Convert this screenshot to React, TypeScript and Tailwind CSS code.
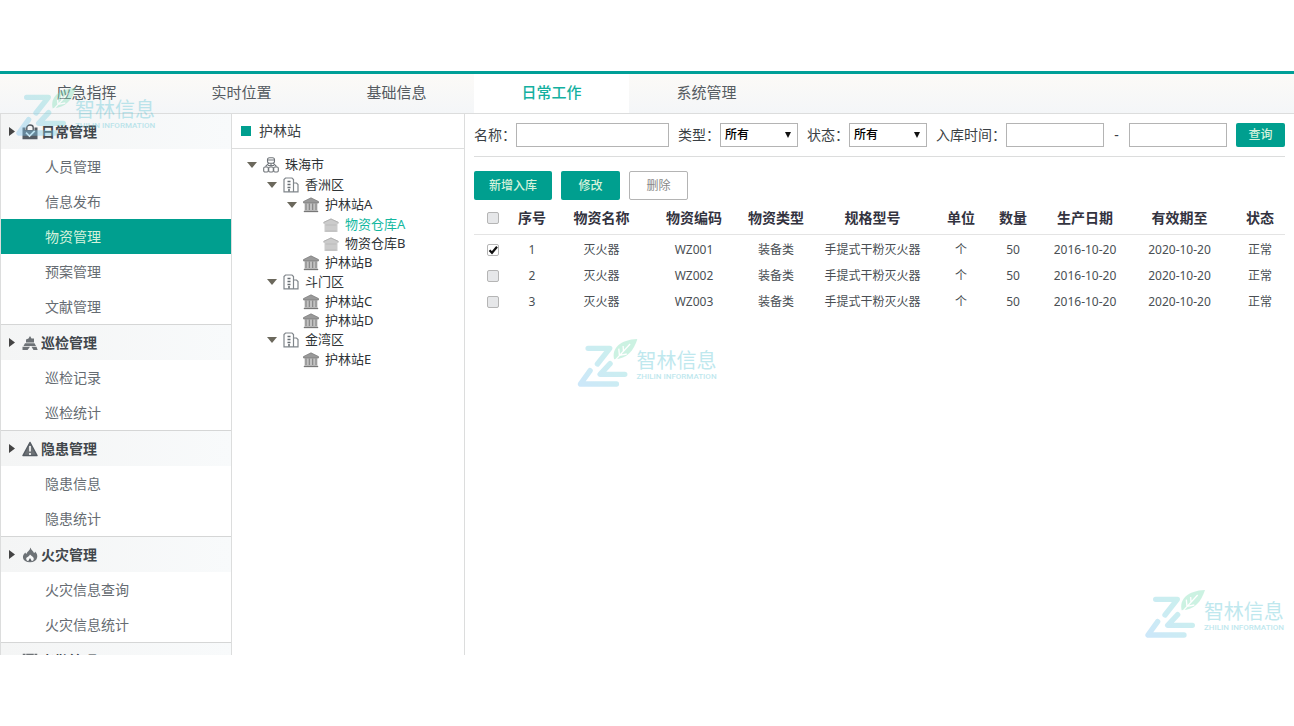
import { useState } from 'react'
import type { ReactNode } from 'react'
import clsx from 'clsx'

type TreeNode = { name: string; kind: 'city' | 'district' | 'station' | 'store'; children?: TreeNode[] }

const tabs = ['应急指挥', '实时位置', '基础信息', '日常工作', '系统管理']

const groups = [
  { title: '日常管理', icon: 'bag', items: ['人员管理', '信息发布', '物资管理', '预案管理', '文献管理'] },
  { title: '巡检管理', icon: 'patrol', items: ['巡检记录', '巡检统计'] },
  { title: '隐患管理', icon: 'warn', items: ['隐患信息', '隐患统计'] },
  { title: '火灾管理', icon: 'fire', items: ['火灾信息查询', '火灾信息统计'] },
  { title: '考勤管理', icon: 'card', items: [] },
]

const tree: TreeNode[] = [
  {
    name: '珠海市',
    kind: 'city',
    children: [
      {
        name: '香洲区',
        kind: 'district',
        children: [
          {
            name: '护林站A',
            kind: 'station',
            children: [
              { name: '物资仓库A', kind: 'store' },
              { name: '物资仓库B', kind: 'store' },
            ],
          },
          { name: '护林站B', kind: 'station' },
        ],
      },
      {
        name: '斗门区',
        kind: 'district',
        children: [
          { name: '护林站C', kind: 'station' },
          { name: '护林站D', kind: 'station' },
        ],
      },
      { name: '金湾区', kind: 'district', children: [{ name: '护林站E', kind: 'station' }] },
    ],
  },
]

const columns = [
  { title: '序号', width: 'w-[40px]' },
  { title: '物资名称', width: 'w-[99px]' },
  { title: '物资编码', width: 'w-[86px]' },
  { title: '物资类型', width: 'w-[78px]' },
  { title: '规格型号', width: 'w-[115px]' },
  { title: '单位', width: 'w-[62px]' },
  { title: '数量', width: 'w-[42px]' },
  { title: '生产日期', width: 'w-[102px]' },
  { title: '有效期至', width: 'w-[87px]' },
  { title: '状态', width: 'w-[62px] pl-3' },
]

const rows = ['WZ001', 'WZ002', 'WZ003'].map((code, i) => [
  String(i + 1), '灭火器', code, '装备类', '手提式干粉灭火器', '个', '50', '2016-10-20', '2020-10-20', '正常',
])

const field = 'h-6 border border-[#b4b4b4] bg-white px-1 text-xs text-black outline-none focus:border-[#009f8f]'

const menuIcons: Record<string, ReactNode> = {
  bag: (
    <>
      <path d="M4.800 6V3.500C4.800 2 6.200 1 8 1S11.200 2 11.200 3.500V6" fill="none" stroke="#555c63" strokeWidth="1.400" />
      <path d="M0.500 3.500H3.500V6H12.500V3.500H15.500V15.300H0.500Z" fill="#555c63" />
      <path d="M4 8.700L7.500 12L12.700 6.800" fill="none" stroke="#e4f3f3" strokeWidth="1.700" />
    </>
  ),
  patrol: (
    <g fill="#6d7276">
      <path d="M8 1L9.500 3.500H12V7.500H4V4.500L6.500 3.500Z" />
      <path d="M3 8.300H12.500L14 11H1.500Z" />
      <path d="M0.500 11.800H8L5.500 15H0.500ZM9.500 11.800H14.500L15.700 15H11.500Z" />
    </g>
  ),
  warn: (
    <>
      <path d="M8 1.500L15 14.500H1Z" fill="#6d7276" stroke="#555c63" strokeWidth="1.500" strokeLinejoin="round" />
      <path d="M8 5V10.500M8 12V14" stroke="#fff" strokeWidth="1.600" />
    </>
  ),
  fire: (
    <>
      <path d="M8.500 0.500C9 3 11.500 4 12 6C13 5.700 13 5 13 4.500C15 6.500 15.800 8.500 15 11C14.300 13.500 12 15.300 8 15.300S1.500 13.500 1 11C0.500 8.500 2 6.500 3.500 5.500C3.500 6.300 4 6.800 4.500 6.800C5 4.500 8 3.500 8.500 0.500Z" fill="#6d7276" />
      <path d="M8 7.500C10 9.500 12 10 11.800 12C11.500 14 9.500 14.300 8 14.300S4.500 14 4.200 12C4 10 7 10 8 7.500Z" fill="#f6f7f7" />
      <path d="M8 11L10 14.500H6Z" fill="#555c63" />
    </>
  ),
  card: (
    <g fill="none" stroke="#6d7276" strokeWidth="1.500">
      <path d="M3.500 1.500H1.500V14H14.500V1.500H12.500" />
      <path d="M5 1.500H11V6H5ZM8 1.500V6M4 9.500H12" />
    </g>
  ),
}

const treeIcons: Record<TreeNode['kind'], ReactNode> = {
  city: (
    <g fill="none" stroke="#70757a" strokeWidth="1.100">
      <rect x="4.500" y="0.800" width="7" height="5.400" rx="2" />
      <path d="M4.500 3H11.500M6 6.200L2.500 9.500M10 6.200L13.500 9.500M8 6.200V9.500M5 8.500H11" />
      <rect x="0.700" y="10" width="4.600" height="5" rx="1.200" />
      <rect x="5.700" y="10" width="4.600" height="5" rx="1.200" />
      <rect x="10.700" y="10" width="4.600" height="5" rx="1.200" />
    </g>
  ),
  district: (
    <g fill="none" stroke="#80868b" strokeWidth="1.200">
      <path d="M1 14.800V2.500L2.500 1H9L10.500 2.500V14.800ZM10.500 6H13.500L15 7.500V14.800H10.500" />
      <path d="M4.500 4.500H7.500M4.500 7.500H7.500M4.500 10.500H7.500M6 12V14.500" stroke="#666c72" strokeWidth="1.500" />
    </g>
  ),
  station: (
    <>
      <path d="M1.500 6H14.500V14.500H1.500Z" fill="#c2c2c2" />
      <path d="M8 0.800L15.500 4.500V6H0.500V4.500Z" fill="#9a9a9a" stroke="#6f6f6f" strokeWidth="0.600" />
      <path d="M3 6.500V13M6.300 6.500V13M9.700 6.500V13M13 6.500V13" stroke="#828282" strokeWidth="1.100" />
      <path d="M0.800 14.500H15.200" stroke="#777" strokeWidth="1.300" />
    </>
  ),
  store: (
    <>
      <path d="M0.500 5L8 1.500L15.500 5V7H14.500V15H1.500V7H0.500Z" fill="#cbcbcb" />
      <path d="M2.500 8H13.500M2.500 14H13.500" stroke="#b8b8b8" strokeWidth="0.800" />
      <path d="M0.500 5.500L8 2L15.500 5.500" fill="none" stroke="#adadad" strokeWidth="0.900" />
    </>
  ),
}

function Icon({ children }: { children: ReactNode }) {
  return <svg viewBox="0 0 16 16" className="size-4 shrink-0" aria-hidden="true">{children}</svg>
}

function Watermark({ id, className }: { id: string; className: string }) {
  return (
    <div className={clsx('pointer-events-none absolute flex items-start opacity-40', className)}>
      <svg viewBox="24 27 180 144" className="h-12 w-[60px]" aria-hidden="true">
        <defs>
          <linearGradient id={id} gradientUnits="userSpaceOnUse" x1="24" y1="171" x2="150" y2="45">
            <stop offset="0" stopColor="#82c4f4" />
            <stop offset="1" stopColor="#7fdcd2" />
          </linearGradient>
        </defs>
        <g fill="none" stroke={`url(#${id})`} strokeWidth="16" strokeLinecap="round" strokeLinejoin="round">
          <path d="M56 55H121L84 102" />
          <path d="M62 122L33 162H141" />
          <path d="M122 101L92 133H166" />
        </g>
        <path d="M134 88C126 55 152 29 204 27C192 62 174 86 134 88Z" fill="#82dfb9" />
        <path d="M134 94L182 42M150 76L148 56M150 76L172 72M162 63L161 48" fill="none" stroke="#fff" strokeWidth="4" />
      </svg>
      <div className="-ml-px pt-2 text-[#62c6d6]">
        <p className="text-xl leading-7">智林信息</p>
        <p className="font-[Roboto,sans-serif] text-[8px] leading-1 font-medium whitespace-nowrap">ZHILIN INFORMATION</p>
      </div>
    </div>
  )
}

function Checkbox({ label, defaultChecked }: { label: string; defaultChecked?: boolean }) {
  return (
    <span className="relative mx-auto block size-3">
      <input
        type="checkbox"
        aria-label={label}
        defaultChecked={defaultChecked}
        className="peer block size-3 appearance-none rounded-xs border border-[#b5b5b5] bg-[#e6e7e9] checked:bg-white"
      />
      <svg viewBox="0 0 12 12" className="pointer-events-none absolute inset-0 hidden size-3 peer-checked:block" aria-hidden="true">
        <path d="M2.500 6.200L5 8.800L10 2.800" fill="none" stroke="#111" strokeWidth="2.200" />
      </svg>
    </span>
  )
}

function Select({ id }: { id: string }) {
  return (
    <span className="relative block">
      <select id={id} className={clsx(field, 'block w-[78px] appearance-none font-medium')}>
        <option>所有</option>
      </select>
      <svg viewBox="0 0 6 6" className="pointer-events-none absolute top-[9px] right-[7px] size-1.5" aria-hidden="true">
        <path d="M0 0H6L3 6Z" fill="#111" />
      </svg>
    </span>
  )
}

function Tree({ nodes, selected, onSelect }: { nodes: TreeNode[]; selected: string; onSelect: (name: string) => void }) {
  return (
    <ul>
      {nodes.map(node => (
        <li key={node.name}>
          <button
            onClick={() => onSelect(node.name)}
            className={clsx('flex h-[19px] items-center text-[13px] whitespace-nowrap', selected === node.name ? 'text-[#14b89f]' : 'text-[#2f3437]')}
          >
            <span className="w-4">
              {node.children && (
                <svg viewBox="0 0 10 6" className="h-1.5 w-2.5" aria-hidden="true">
                  <path d="M0 0H10L5 6Z" fill="#6b685c" />
                </svg>
              )}
            </span>
            <Icon>{treeIcons[node.kind]}</Icon>
            <span className="ml-1.5">{node.name}</span>
          </button>
          {node.children && (
            <div className="pt-px pl-5">
              <Tree nodes={node.children} selected={selected} onSelect={onSelect} />
            </div>
          )}
        </li>
      ))}
    </ul>
  )
}

export default function App() {
  const [tab, setTab] = useState('日常工作')
  const [menu, setMenu] = useState('物资管理')
  const [node, setNode] = useState('物资仓库A')

  return (
    <div lang="zh-CN" className="relative h-screen bg-white py-[71px] font-['Noto_Sans','Noto_Sans_CJK_SC',sans-serif] text-[#3a3f44]">
      <div className="flex h-full flex-col overflow-hidden">
        <header className="shrink-0 border-t-3 border-b border-t-[#009f97] border-b-[#dcdddd] bg-linear-to-b from-[#fcfaf7] to-[#f4f6f8]">
          <nav className="flex h-[39px] pl-[9px]">
            {tabs.map(t => (
              <button
                key={t}
                onClick={() => setTab(t)}
                className={clsx('w-[155px] pb-0.5 text-[15px]', t === tab ? 'bg-white font-medium text-[#14b09f]' : 'text-[#555b61]')}
              >
                {t}
              </button>
            ))}
          </nav>
        </header>

        <div className="flex min-h-0 flex-1">
          {/* Menu */}
          <aside className="w-[232px] shrink-0 overflow-hidden border-x border-[#dcdddd] text-sm">
            {groups.map((g, i) => (
              <section key={g.title}>
                <h2 className={clsx('flex items-center bg-linear-to-r from-[#f4f5f5] to-[#f8fafb] pl-2 font-bold text-[#42474c]', i > 0 ? 'h-9 border-t border-[#d5d6d6]' : 'h-[35px]')}>
                  <svg viewBox="0 0 6 9" className="mr-[7px] h-[9px] w-1.5" aria-hidden="true">
                    <path d="M0 0L6 4.500L0 9Z" fill="#444" />
                  </svg>
                  <Icon>{menuIcons[g.icon]}</Icon>
                  <span className="ml-[3px]">{g.title}</span>
                </h2>
                {g.items.map(item => (
                  <button
                    key={item}
                    onClick={() => setMenu(item)}
                    className={clsx('block h-[35px] w-full pl-11 text-left', item === menu ? 'bg-[#009f8f] text-[#d5f2dc]' : 'text-[#666c72]')}
                  >
                    {item}
                  </button>
                ))}
              </section>
            ))}
          </aside>

          {/* Stations */}
          <aside className="w-[233px] shrink-0 border-r border-[#dcdddd]">
            <h2 className="flex h-[35px] items-center gap-2 border-b border-[#dcdddd] pl-[9px] text-sm text-[#3a3f44]">
              <span className="size-2.5 bg-[#009f8f]" />
              护林站
            </h2>
            <div className="pt-1.5 pl-[15px]">
              <Tree nodes={tree} selected={node} onSelect={setNode} />
            </div>
          </aside>

          {/* Supplies */}
          <main className="min-w-0 flex-1 px-[9px] pt-[9px]">
            <form onSubmit={e => e.preventDefault()} className="flex items-center border-b border-[#dcdddd] pb-[9px] text-sm">
              <label htmlFor="name">名称：</label>
              <input id="name" className={clsx(field, 'mr-[9px] min-w-0 flex-1')} />
              <label htmlFor="type">类型：</label>
              <Select id="type" />
              <label htmlFor="status" className="ml-[9px]">状态：</label>
              <Select id="status" />
              <label htmlFor="from" className="ml-[9px]">入库时间：</label>
              <input id="from" className={clsx(field, 'w-[98px]')} />
              <span className="w-[25px] text-center">-</span>
              <input aria-label="截止时间" className={clsx(field, 'w-[98px]')} />
              <button className="ml-[9px] h-6 w-[49px] rounded-xs bg-[#009f8f] text-xs font-medium text-[#d5f2dc]">查询</button>
            </form>

            <div className="mt-3.5 flex gap-[9px] text-xs">
              <button className="h-[29px] w-[78px] rounded-xs bg-[#009f8f] font-medium text-[#d5f2dc]">新增入库</button>
              <button className="h-[29px] w-[59px] rounded-xs bg-[#009f8f] font-medium text-[#d5f2dc]">修改</button>
              <button className="h-[29px] w-[59px] rounded-xs border border-[#b4b4b4] text-[#888]">删除</button>
            </div>

            <table className="mt-0.5 w-full table-fixed border-collapse text-center text-xs">
              <thead>
                <tr className="h-8 border-b border-[#e4e4e4] text-sm text-[#33333f]">
                  <th className="w-[38px]"><Checkbox label="全选" /></th>
                  {columns.map(c => (
                    <th key={c.title} className={clsx('whitespace-nowrap', c.width)}>{c.title}</th>
                  ))}
                </tr>
              </thead>
              <tbody className="text-[#4a4f54]">
                {rows.map((row, i) => (
                  <tr key={row[0]} className="h-[26px]">
                    <td className="pt-1.5"><Checkbox label={row[2]} defaultChecked={i === 0} /></td>
                    {row.map((cell, c) => (
                      <td key={c} className={clsx('pt-1.5 whitespace-nowrap', c === 9 && 'pl-3')}>{cell}</td>
                    ))}
                  </tr>
                ))}
              </tbody>
            </table>
          </main>
        </div>
      </div>

      <Watermark id="mark-a" className="top-[88px] left-4" />
      <Watermark id="mark-b" className="top-1/2 left-1/2 -translate-1/2" />
      <Watermark id="mark-c" className="right-2.5 bottom-[88px]" />
    </div>
  )
}
